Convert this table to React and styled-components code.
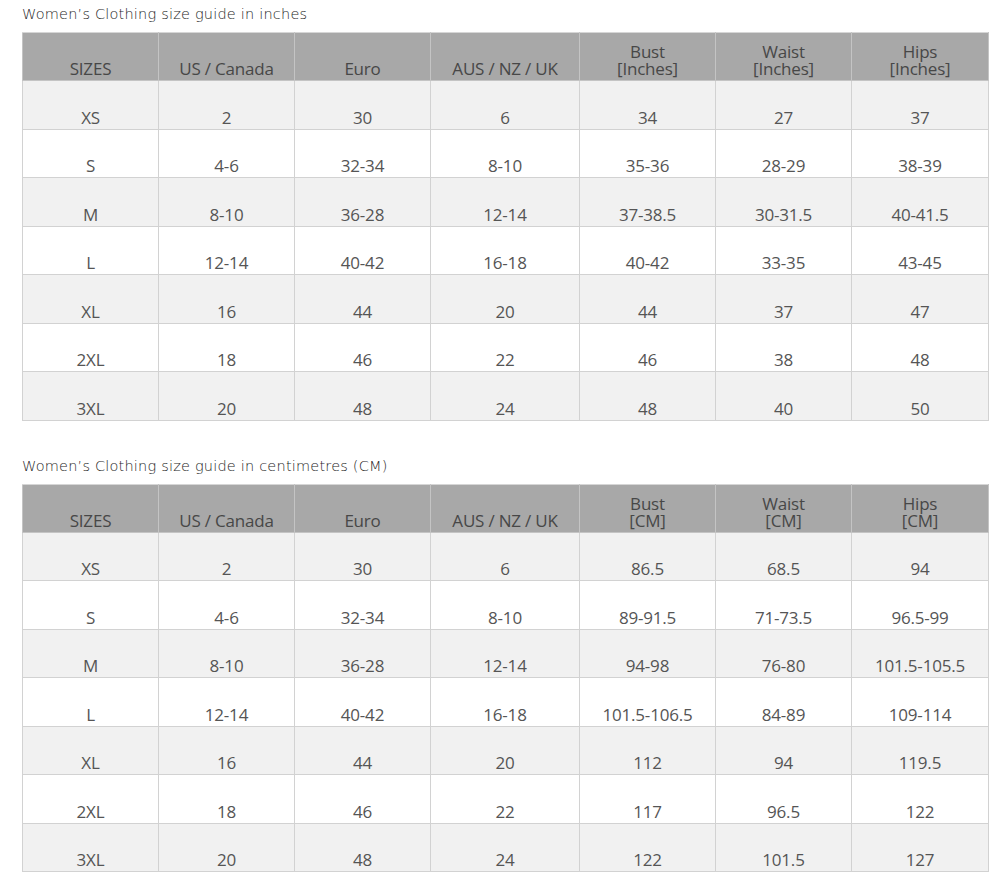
import styled, { createGlobalStyle } from "styled-components";

const GlobalStyle = createGlobalStyle`
  body {
    margin: 0;
    background: #fff;
  }
`;

const columns = [136, 136, 136, 149, 136, 136, 137];

const guides = [
  {
    title: "Women’s Clothing size guide in inches",
    unit: "Inches",
    rows: [
      ["XS", "2", "30", "6", "34", "27", "37"],
      ["S", "4-6", "32-34", "8-10", "35-36", "28-29", "38-39"],
      ["M", "8-10", "36-28", "12-14", "37-38.5", "30-31.5", "40-41.5"],
      ["L", "12-14", "40-42", "16-18", "40-42", "33-35", "43-45"],
      ["XL", "16", "44", "20", "44", "37", "47"],
      ["2XL", "18", "46", "22", "46", "38", "48"],
      ["3XL", "20", "48", "24", "48", "40", "50"],
    ],
  },
  {
    title: "Women’s Clothing size guide in centimetres (CM)",
    unit: "CM",
    rows: [
      ["XS", "2", "30", "6", "86.5", "68.5", "94"],
      ["S", "4-6", "32-34", "8-10", "89-91.5", "71-73.5", "96.5-99"],
      ["M", "8-10", "36-28", "12-14", "94-98", "76-80", "101.5-105.5"],
      ["L", "12-14", "40-42", "16-18", "101.5-106.5", "84-89", "109-114"],
      ["XL", "16", "44", "20", "112", "94", "119.5"],
      ["2XL", "18", "46", "22", "117", "96.5", "122"],
      ["3XL", "20", "48", "24", "122", "101.5", "127"],
    ],
  },
];

const Page = styled.div`
  padding: 0 0 16px 22px;
`;

const Section = styled.section`
  & + & {
    margin-top: 31px;
  }
`;

const Title = styled.h3`
  margin: 0;
  height: 32px;
  line-height: 28px;
  font-family: "DejaVu Sans", sans-serif;
  font-weight: 300;
  font-size: 14.5px;
  letter-spacing: 0.2px;
  color: #1e1e1e;
`;

const Table = styled.table`
  width: 966px;
  table-layout: fixed;
  border-collapse: collapse;
  font-family: "Open Sans", sans-serif;
  font-size: 17px;
  letter-spacing: -0.2px;
  color: #555;
`;

const Head = styled.th`
  height: 44px;
  padding: 0 4px 3px;
  background: #a8a8a8;
  border: 1px solid #c4c4c4;
  border-top-color: #d6d6d6;
  font-weight: 400;
  color: #474747;
  line-height: 17px;
  vertical-align: bottom;
  text-align: center;
`;

const Row = styled.tr`
  background: ${({ $odd }) => ($odd ? "#f1f1f1" : "#fff")};
`;

const Cell = styled.td`
  height: 46.5px;
  padding: 0 4px 1px;
  border: 1px solid #d2d2d2;
  line-height: 20px;
  vertical-align: bottom;
  text-align: center;
`;

const SizeTable = ({ title, unit, rows }) => (
  <Section>
    <Title>{title}</Title>
    <Table>
      <colgroup>
        {columns.map((w, i) => (
          <col key={i} style={{ width: w }} />
        ))}
      </colgroup>
      <thead>
        <tr>
          <Head>SIZES</Head>
          <Head>US / Canada</Head>
          <Head>Euro</Head>
          <Head>AUS / NZ / UK</Head>
          {["Bust", "Waist", "Hips"].map((m) => (
            <Head key={m}>
              {m}
              <br />[{unit}]
            </Head>
          ))}
        </tr>
      </thead>
      <tbody>
        {rows.map((row, idx) => (
          <Row key={row[0]} $odd={idx % 2 === 0}>
            {row.map((v, i) => (
              <Cell key={i}>{v}</Cell>
            ))}
          </Row>
        ))}
      </tbody>
    </Table>
  </Section>
);

const App = () => (
  <>
    <GlobalStyle />
    <Page>
      {guides.map((g) => (
        <SizeTable key={g.unit} {...g} />
      ))}
    </Page>
  </>
);

export default App;
